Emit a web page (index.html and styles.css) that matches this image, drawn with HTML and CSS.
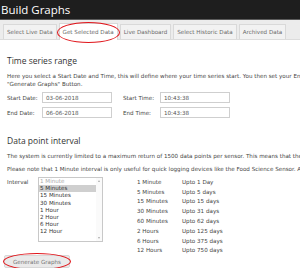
FILE: index.html
```html
<!DOCTYPE html>
<html>
<head>
<meta charset="utf-8">
<link rel="stylesheet" href="styles.css">
</head>
<body>
<header class="topbar"><h1 class="title">Build Graphs</h1></header>
<nav class="tabs">
  <a class="tab">Select Live Data</a>
  <a class="tab active">Get Selected Data</a>
  <a class="tab">Live Dashboard</a>
  <a class="tab">Select Historic Data</a>
  <a class="tab">Archived Data</a>
</nav>
<main class="content">
  <h2 class="section-title">Time series range</h2>
  <p class="text">Here you select a Start Date and Time, this will define where your time series start. You then set your End Date and Time, this will define where your time series will end. Then simply click the<br>"Generate Graphs" Button.</p>
  <div class="dt-grid">
    <label class="lbl">Start Date:</label><span class="field">03-06-2018</span>
    <label class="lbl">Start Time:</label><span class="field">10:43:38</span>
    <label class="lbl">End Date:</label><span class="field">06-06-2018</span>
    <label class="lbl">End Time:</label><span class="field">10:43:38</span>
  </div>
  <h2 class="section-title second">Data point interval</h2>
  <p class="text">The system is currently limited to a maximum return of 1500 data points per sensor. This means that the interval you choose will limit the period of time you can view.</p>
  <p class="text">Please note that 1 Minute interval is only useful for quick logging devices like the Food Science Sensor. All other sensors log at 5 minutes or more.</p>
  <div class="interval-row">
    <span class="lbl">Interval</span>
    <div class="listbox">
      <ul class="options">
        <li class="opt disabled">1 Minute</li>
        <li class="opt selected">5 Minutes</li>
        <li class="opt">15 Minutes</li>
        <li class="opt">30 Minutes</li>
        <li class="opt">1 Hour</li>
        <li class="opt">2 Hour</li>
        <li class="opt">6 Hour</li>
        <li class="opt">12 Hour</li>
      </ul>
      <div class="scrollbar"><span class="arrow up"></span><span class="arrow down"></span></div>
    </div>
    <table class="limits">
      <tr><td>1 Minute</td><td>Upto 1 Day</td></tr>
      <tr><td>5 Minutes</td><td>Upto 5 days</td></tr>
      <tr><td>15 Minutes</td><td>Upto 15 days</td></tr>
      <tr><td>30 Minutes</td><td>Upto 31 days</td></tr>
      <tr><td>60 Minutes</td><td>Upto 62 days</td></tr>
      <tr><td>2 Hours</td><td>Upto 125 days</td></tr>
      <tr><td>6 Hours</td><td>Upto 375 days</td></tr>
      <tr><td>12 Hours</td><td>Upto 750 days</td></tr>
    </table>
  </div>
  <button class="btn">Generate Graphs</button>
</main>
</body>
</html>
```
FILE: styles.css
```css
html, body {
  margin: 0;
  padding: 0;
  overflow: hidden;
  background: #fff;
  font-family: "DejaVu Sans", Verdana, sans-serif;
  font-size: 5.6px;
  color: #444;
}
.topbar {
  height: 19px;
  background: #1e1e1e;
  border-bottom: 1px solid #5a5a5a;
  display: flex;
  align-items: center;
}
.title {
  margin: 0 0 0 1px;
  font-family: "Open Sans", sans-serif;
  font-weight: normal;
  font-size: 11.5px;
  color: #fff;
}
.tabs {
  height: 20px;
  background: #ececec;
  border-bottom: 1px solid #dcdcdc;
  display: flex;
  align-items: flex-end;
  padding-left: 3px;
  gap: 2px;
  box-sizing: border-box;
}
.tab {
  height: 15px;
  display: flex;
  align-items: center;
  padding: 0 3px;
  background: #f2f2f2;
  border: 1px solid #d9d9d9;
  border-bottom: none;
  color: #6a6a6a;
  white-space: nowrap;
  box-sizing: border-box;
}
.tab.active {
  background: #fff;
  height: 17px;
  position: relative;
  margin-bottom: -1px;
}
.tab.active::after {
  content: "";
  position: absolute;
  left: -3px; right: -3px; top: -2px; bottom: -3px;
  border: 1.5px solid #e0151b;
  border-radius: 50%;
}
.content {
  padding: 0 0 0 7px;
  white-space: nowrap;
}
.section-title {
  margin: 15px 0 0;
  font-family: "Open Sans", sans-serif;
  font-weight: normal;
  font-size: 8.5px;
  line-height: 12px;
  color: #333;
}
.section-title.second { margin-top: 17px; }
.text {
  margin: 5px 0 0;
  line-height: 8px;
}
.dt-grid {
  display: grid;
  grid-template-columns: 35px 70px 48px 70px;
  column-gap: 0;
  row-gap: 4px;
  align-items: center;
  margin-top: 4px;
}
.dt-grid .lbl:nth-of-type(2n) { padding-left: 11px; }
.field {
  height: 11px;
  box-sizing: border-box;
  border: 1px solid #cfcfcf;
  padding-left: 3px;
  display: flex;
  align-items: center;
  color: #555;
}
.interval-row {
  display: flex;
  align-items: flex-start;
  margin-top: 4px;
}
.interval-row > .lbl {
  width: 31px;
  margin-top: 2px;
}
.listbox {
  width: 65px;
  height: 65px;
  box-sizing: border-box;
  border: 1px solid #c8c8c8;
  display: flex;
}
.options {
  list-style: none;
  margin: 0;
  padding: 0;
  flex: 1;
  font-size: 5.6px;
  color: #333;
}
.opt {
  height: 7.2px;
  line-height: 7.2px;
  padding-left: 1px;
}
.opt.disabled { color: #aaa; }
.opt.selected { background: #cfcfcf; }
.scrollbar {
  width: 6px;
  background: #fafafa;
  display: flex;
  flex-direction: column;
  justify-content: space-between;
  align-items: center;
  padding: 2px 0;
  box-sizing: border-box;
}
.arrow {
  width: 0; height: 0;
  border-left: 1.5px solid transparent;
  border-right: 1.5px solid transparent;
}
.arrow.up { border-bottom: 2px solid #aaa; }
.arrow.down { border-top: 2px solid #aaa; }
.limits {
  border-collapse: collapse;
  margin-left: 34px;
}
.limits td {
  padding: 0;
  height: 9.8px;
  vertical-align: middle;
}
.limits td:first-child { width: 45px; }
.btn {
  display: block;
  margin: 0 0 0 -3px;
  height: 13px;
  width: 66px;
  font-family: "DejaVu Sans", Verdana, sans-serif;
  font-size: 5.6px;
  color: #777;
  background: #eaeaea;
  border: 1px solid #d8d8d8;
  border-radius: 2px;
  position: relative;
}
.btn::after {
  content: "";
  position: absolute;
  left: -2px; right: -2px; top: -3px; bottom: -3px;
  border: 1.5px solid #e0151b;
  border-radius: 50%;
}
```
